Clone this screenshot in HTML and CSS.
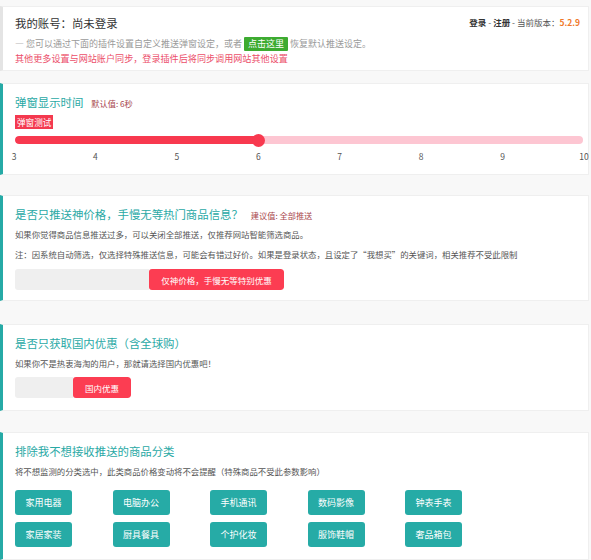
FILE: index.html
```html
<!DOCTYPE html>
<html lang="zh-CN">
<head>
<meta charset="utf-8">
<title>设置</title>
<link rel="stylesheet" href="styles.css">
</head>
<body>
<div class="page">
  <section class="card card--account">
    <div class="account-head">
      <h1 class="account-title">我的账号：尚未登录</h1>
      <div class="account-meta"><b>登录</b> - <b>注册</b> - 当前版本：<span class="version">5.2.9</span></div>
    </div>
    <p class="account-line account-line--first">— 您可以通过下面的插件设置自定义推送弹窗设定，或者 <span class="btn-green">点击这里</span> 恢复默认推送设定。</p>
    <p class="account-line account-line--red">其他更多设置与网站账户同步，登录插件后将同步调用网站其他设置</p>
  </section>

  <section class="card card--popup">
    <h2 class="card-title">弹窗显示时间<span class="hint">默认值: 6秒</span></h2>
    <span class="tag">弹窗测试</span>
    <div class="slider">
      <div class="track"><div class="fill" style="width:42.86%"></div></div>
      <div class="thumb" style="left:42.86%"></div>
    </div>
    <div class="ticks">
      <span class="tick">3</span><span class="tick">4</span><span class="tick">5</span><span class="tick">6</span><span class="tick">7</span><span class="tick">8</span><span class="tick">9</span><span class="tick">10</span>
    </div>
  </section>

  <section class="card card--hot">
    <h2 class="card-title">是否只推送神价格，手慢无等热门商品信息？<span class="hint">建议值: 全部推送</span></h2>
    <p class="desc">如果你觉得商品信息推送过多，可以关闭全部推送，仅推荐网站智能筛选商品。</p>
    <p class="desc desc--note">注：因系统自动筛选，仅选择特殊推送信息，可能会有错过好价。如果是登录状态，且设定了“我想买”的关键词，相关推荐不受此限制</p>
    <div class="toggle toggle--wide">
      <span class="toggle-off"></span>
      <span class="toggle-on">仅神价格，手慢无等特别优惠</span>
    </div>
  </section>

  <section class="card card--domestic">
    <h2 class="card-title">是否只获取国内优惠（含全球购）</h2>
    <p class="desc">如果你不是热衷海淘的用户，那就请选择国内优惠吧！</p>
    <div class="toggle toggle--small">
      <span class="toggle-off"></span>
      <span class="toggle-on">国内优惠</span>
    </div>
  </section>

  <section class="card card--cats">
    <h2 class="card-title">排除我不想接收推送的商品分类</h2>
    <p class="desc">将不想监测的分类选中，此类商品价格变动将不会提醒（特殊商品不受此参数影响）</p>
    <div class="cats">
      <span class="cat">家用电器</span>
      <span class="cat">电脑办公</span>
      <span class="cat">手机通讯</span>
      <span class="cat">数码影像</span>
      <span class="cat">钟表手表</span>
      <span class="cat">家居家装</span>
      <span class="cat">厨具餐具</span>
      <span class="cat">个护化妆</span>
      <span class="cat">服饰鞋帽</span>
      <span class="cat">奢品箱包</span>
    </div>
  </section>
</div>
</body>
</html>
```

FILE: styles.css
```css
* { box-sizing: border-box; }
html, body { margin: 0; padding: 0; }
body {
  background: #f8f8f8;
  font-family: "Noto Sans CJK SC", "Noto Sans", "Liberation Sans", sans-serif;
  color: #555;
  width: 591px;
  height: 560px;
  overflow: hidden;
}
.page { padding-top: 6px; padding-right: 2px; }
h1, h2, p { margin: 0; font-weight: normal; }

.card {
  background: #fff;
  border: 1px solid #efefef;
  border-left: 3px solid #26aaa6;
  padding: 9px 8px 10px 12px;
}
.card--account {
  border-left-color: #e4e4e4;
  padding-top: 7px;
  padding-bottom: 5px;
  margin-bottom: 12px;
}
.card--popup { margin-bottom: 20px; padding-bottom: 12px; }
.card--hot { margin-bottom: 23px; }
.card--domestic { margin-bottom: 21px; padding-bottom: 12px; }
.card--cats { padding-bottom: 12px; }

.account-head {
  display: flex;
  justify-content: space-between;
  align-items: center;
  height: 18px;
}
.account-title { font-size: 11.4px; line-height: 18px; height: 18px; color: #333; }
.account-meta { font-size: 8.5px; line-height: 12px; height: 12px; color: #555; margin-top: -2px; }
.account-meta b { color: #333; font-weight: bold; }
.version { color: #f0782a; font-weight: bold; }
.account-line {
  font-size: 9px;
  line-height: 14px;
  height: 14px;
  color: #9a9a9a;
  white-space: nowrap;
}
.account-line--first { margin-top: 5px; }
.account-line--red { color: #ec4e6a; font-size: 9.1px; }
.btn-green {
  display: inline-block;
  vertical-align: top;
  background: #3dab31;
  color: #fff;
  line-height: 14px;
  height: 14px;
  padding: 0 4px;
  border-radius: 1px;
}

.card-title {
  font-size: 11.4px;
  line-height: 18px;
  height: 18px;
  color: #29a9a5;
  display: flex;
  align-items: center;
  white-space: nowrap;
}
.hint { font-size: 8.2px; line-height: 12px; color: #a8464c; margin-left: 8px; margin-top: 1px; }

.tag {
  display: block;
  width: max-content;
  height: 14px;
  margin-top: 4px;
  background: #f4394f;
  color: #fff;
  font-size: 8.6px;
  line-height: 14px;
  padding: 0 2px;
}
.slider { position: relative; margin-top: 7px; height: 8px; width: 568px; }
.track { height: 8px; border-radius: 4px; background: #fdc6d2; overflow: hidden; }
.fill { height: 8px; background: #f8394f; border-radius: 4px; }
.thumb {
  position: absolute;
  top: -2.5px;
  width: 13px;
  height: 13px;
  margin-left: -6.5px;
  border-radius: 50%;
  background: #f8394f;
}
.ticks {
  display: flex;
  justify-content: space-between;
  width: 570px;
  height: 12px;
  margin-left: -1px;
  margin-top: 6px;
  font-size: 8.5px;
  line-height: 12px;
  color: #555;
}
.tick { width: 0; display: flex; justify-content: center; white-space: nowrap; }

.desc {
  font-size: 8.4px;
  line-height: 14px;
  height: 14px;
  color: #555;
  margin-top: 4px;
  white-space: nowrap;
}
.desc--note { margin-top: 6px; }

.toggle {
  display: flex;
  width: max-content;
  height: 21px;
  margin-top: 8px;
  border-radius: 3px;
  overflow: hidden;
}
.toggle-off { background: #efefef; }
.toggle-on {
  background: #fc3d52;
  color: #fff;
  font-size: 8.5px;
  display: flex;
  align-items: center;
  justify-content: center;
  border-radius: 3px;
}
.toggle--wide .toggle-off { width: 134px; }
.toggle--wide .toggle-on { width: 135px; }
.toggle--small { margin-top: 7px; }
.toggle--small .toggle-off { width: 58px; }
.toggle--small .toggle-on { width: 58px; }

.cats {
  display: grid;
  grid-template-columns: repeat(5, 57px);
  column-gap: 40.5px;
  row-gap: 7px;
  margin-top: 12px;
}
.cat {
  height: 25px;
  background: #26aba6;
  color: #fff;
  font-size: 9px;
  border-radius: 3px;
  display: flex;
  align-items: center;
  justify-content: center;
}
```
